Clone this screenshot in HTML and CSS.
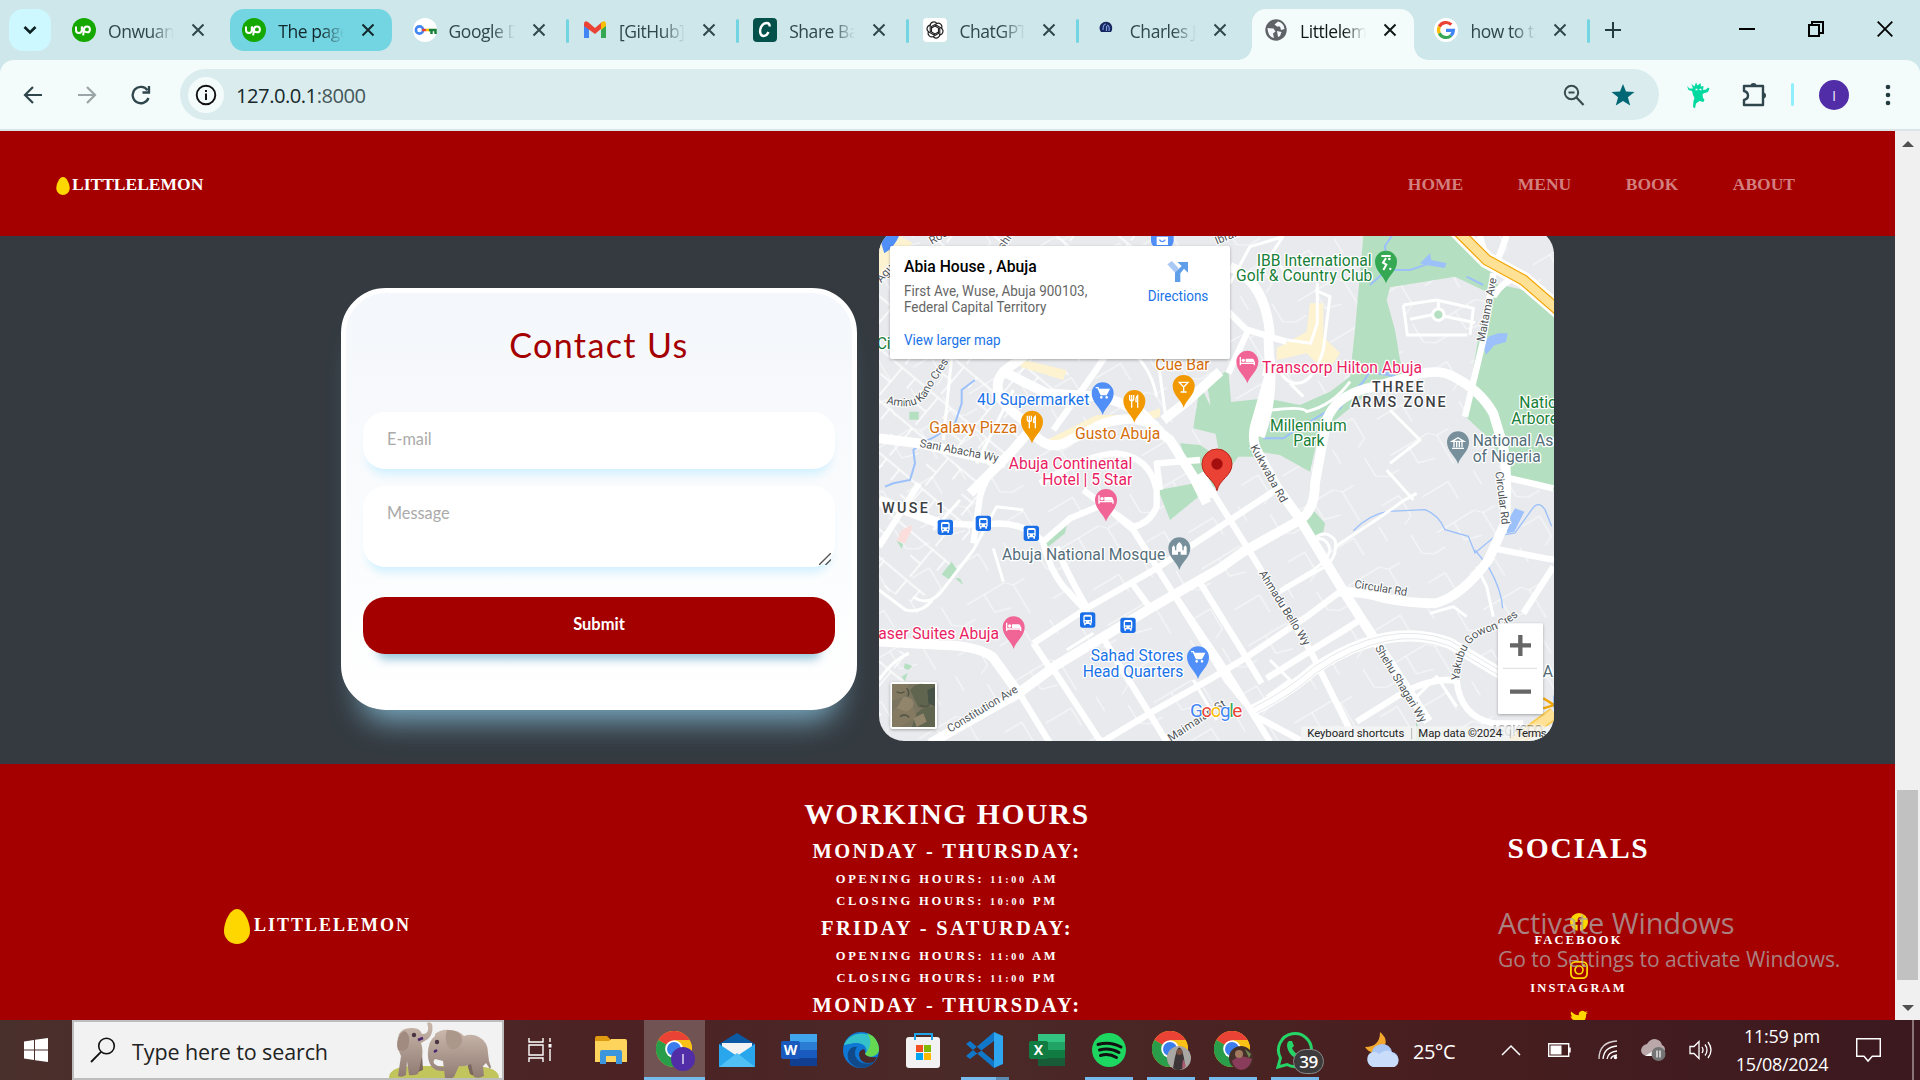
FILE: index.html
```html
<!DOCTYPE html>
<html lang="en">
<head>
<meta charset="utf-8">
<title>Littlelemon</title>
<link rel="stylesheet" href="styles.css">
</head>
<body>
<svg class="defs" width="0" height="0" aria-hidden="true">
  <defs>
    <symbol id="x" viewBox="0 0 14 14"><path d="M1.500 1.500l11 11M12.500 1.500l-11 11" fill="none" stroke="currentColor" stroke-width="2"/></symbol>
    <symbol id="upwork" viewBox="0 0 24 24"><circle cx="12" cy="12" r="12" fill="#14a800"/><path d="M4 8.500v3.500a2.900 2.900 0 0 0 5.800 0V8.500c1 3 2.500 5.800 5.200 5.800a2.900 2.900 0 1 0-2.900-2.900l-1 6" fill="none" stroke="#fff" stroke-width="2"/></symbol>
    <symbol id="chrome" viewBox="0 0 36 36"><circle cx="18" cy="18" r="18" fill="#fbc116"/><path d="M18 18L2.400 9A18 18 0 0 1 33.600 9z" fill="#ea4335"/><path d="M2.400 9A18 18 0 0 0 18 36l8-13.500-8-4.500z" fill="#2a9d4a"/><path d="M18 9h15.600A18 18 0 0 1 18 36l7.800-13.500z" fill="#fbc116"/><circle cx="18" cy="18" r="8.800" fill="#fff"/><circle cx="18" cy="18" r="7" fill="#3b7ded"/></symbol>
    <symbol id="egg" viewBox="0 0 26 35"><path d="M13 0C20 0 26 13 26 22a13 13 0 0 1-26 0C0 13 6 0 13 0z" fill="#ffd700"/></symbol>
    <path id="petal" d="M8.500 14V8.500l4.800-2.800a3.700 3.700 0 0 1 5.200 4.800"/>
    <path id="pin" d="M0 0C-6-22-33-38-33-65A33 33 0 1 1 33-65C33-38 6-22 0 0z"/>
    <g id="bed"><path d="M-21-79v25M21-54v-11M-21-60h42" stroke="#fff" stroke-width="4" fill="none"/><circle cx="-12" cy="-69" r="5" fill="#fff"/><path d="M-5-74h19q7 0 7 8v3H-5z" fill="#fff"/></g>
    <g id="cart" fill="none" stroke="#fff" stroke-width="4"><path d="M-21-82h7l9 21h18M-12-77h31l-6 12H-6z"/><path d="M-10-75h26l-5 9H-6z" fill="#fff"/><circle cx="-4" cy="-53" r="2"/><circle cx="12" cy="-53" r="2"/></g>
    <g id="fork" fill="none" stroke="#fff" stroke-width="4"><path d="M-14-83v12q0 5 6 5t6-5v-12M-8-83v38M10-45v-36q-6 4-5 18h5"/></g>
    <g id="bus"><rect x="-23" y="-23" width="46" height="46" rx="8" fill="#1a6fe8"/><rect x="-13" y="-16" width="26" height="28" rx="6" fill="#fff"/><path d="M-9-10H9V0H-9z" fill="#1a6fe8"/><circle cx="-7" cy="6" r="2.500" fill="#1a6fe8"/><circle cx="7" cy="6" r="2.500" fill="#1a6fe8"/><path d="M-11 10v6h5v-6zM6 10v6h5v-6z" fill="#fff"/></g>
  </defs>
</svg>

<header class="browser">
  <div class="strip">
    <span class="tab-search"><svg width="14" height="10" viewBox="0 0 14 10"><path d="M1.500 2l5.500 5.500L12.500 2" fill="none" stroke="#0e1f22" stroke-width="2.600"/></svg></span>
    <div class="tabs">
      <div class="tab"><svg width="24" height="24"><use href="#upwork"/></svg><span class="name">Onwuanyi</span><svg class="close" width="14" height="14"><use href="#x"/></svg></div>
      <div class="tab hot"><svg width="24" height="24"><use href="#upwork"/></svg><span class="name">The page</span><svg class="close" width="14" height="14"><use href="#x"/></svg></div>
      <div class="tab sep"><svg width="24" height="24" viewBox="0 0 24 24"><circle cx="12" cy="12" r="12" fill="#fff"/><circle cx="6.500" cy="12" r="3.600" fill="none" stroke="#4285f4" stroke-width="2.600"/><path d="M9 12h4" stroke="#ea4335" stroke-width="2.500"/><path d="M13 12h4" stroke="#fbbc04" stroke-width="2.500"/><path d="M16 12h6.500v4M18.500 12v4" stroke="#188038" stroke-width="2.500" fill="none"/></svg><span class="name">Google D</span><svg class="close" width="14" height="14"><use href="#x"/></svg></div>
      <div class="tab sep"><svg width="24" height="24" viewBox="0 0 24 24"><path d="M1 6v14h5V10z" fill="#4285f4"/><path d="M18 10v10h5V6z" fill="#34a853"/><path d="M1 6q0-4 4-2l7 6 7-6v6l-7 6L1 8z" fill="#ea4335"/><path d="M18 4.800q5-3.500 5 1.200v2l-5 4z" fill="#fbbc04"/></svg><span class="name">[GitHub]</span><svg class="close" width="14" height="14"><use href="#x"/></svg></div>
      <div class="tab sep"><svg width="24" height="24" viewBox="0 0 24 24"><rect width="24" height="24" rx="4" fill="#04504a"/><path d="M16.500 8.500q.5-3.500-3-3.500C9 5 6 11 7.500 15.500c1.500 4 6 3 8-1.500" fill="none" stroke="#fff" stroke-width="2.400"/></svg><span class="name">Share Ba</span><svg class="close" width="14" height="14"><use href="#x"/></svg></div>
      <div class="tab sep"><svg width="24" height="24" viewBox="0 0 24 24"><rect width="24" height="24" rx="4" fill="#fff"/><g fill="none" stroke="#222" stroke-width="1.150"><use href="#petal"/><use href="#petal" transform="rotate(60 12 12)"/><use href="#petal" transform="rotate(120 12 12)"/><use href="#petal" transform="rotate(180 12 12)"/><use href="#petal" transform="rotate(240 12 12)"/><use href="#petal" transform="rotate(300 12 12)"/></g></svg><span class="name">ChatGPT</span><svg class="close" width="14" height="14"><use href="#x"/></svg></div>
      <div class="tab"><svg width="24" height="24" viewBox="0 0 24 24"><path d="M7 14Q4 10 7 6q4-4 9-1 4 4 1 9z" fill="#16275f"/><path d="M9 12q0-6 3-6M12.500 13V8m2.500 5q1-5-2-6" stroke="#7d9be0" stroke-width="1.200" fill="none"/></svg><span class="name">Charles J</span><svg class="close" width="14" height="14"><use href="#x"/></svg></div>
      <div class="tab active"><svg width="24" height="24" viewBox="0 0 24 24"><circle cx="12" cy="12" r="10.700" fill="#5f6368"/><path d="M3.500 10l6 .5 2 3-2.500 2 1 4.500Q4 19 3.500 10zM14 3.500l-3.500 3 2.500 2h3l1 3.500 3.500-1Q20 5 14 3.500zM13 13l4.500 1-1.500 4-2 1z" fill="#f4fafb"/></svg><span class="name">Littlelemon</span><svg class="close" width="14" height="14"><use href="#x"/></svg></div>
      <div class="tab sep"><svg width="24" height="24" viewBox="0 0 24 24"><circle cx="12" cy="12" r="12" fill="#fff"/><g fill="none" stroke-width="3.200"><path d="M17.300 6.700A7.500 7.500 0 0 0 5.300 8.700" stroke="#ea4335"/><path d="M5.300 8.700a7.500 7.500 0 0 0 0 6.600" stroke="#fbbc04"/><path d="M5.300 15.300a7.500 7.500 0 0 0 11.700 2.300" stroke="#34a853"/><path d="M17 17.600a7.500 7.500 0 0 0 2.400-5.200H12" stroke="#4285f4"/></g></svg><span class="name">how to tak</span><svg class="close" width="14" height="14"><use href="#x"/></svg></div>
    </div>
    <svg class="plus" width="16" height="16" viewBox="0 0 16 16"><path d="M8 0v16M0 8h16" stroke="#233a3e" stroke-width="2"/></svg>
    <div class="win-buttons">
      <svg width="16" height="16" viewBox="0 0 16 16"><path d="M0 8h16" stroke="#000" stroke-width="2"/></svg>
      <svg width="16" height="16" viewBox="0 0 16 16"><path d="M1 4h10v11H1zM4 4V1h11v11h-4" fill="none" stroke="#000" stroke-width="2"/></svg>
      <svg width="16" height="16" viewBox="0 0 16 16"><path d="M.7.700l14.600 14.600M15.300.700L.7 15.300" stroke="#000" stroke-width="1.800"/></svg>
    </div>
  </div>
  <div class="toolbar">
    <div class="nav-buttons">
      <svg width="20" height="20" viewBox="0 0 20 20"><path d="M19 10H2M10 2l-8 8 8 8" fill="none" stroke="#2f474c" stroke-width="2.200"/></svg>
      <svg width="20" height="20" viewBox="0 0 20 20"><path d="M1 10h17M10 2l8 8-8 8" fill="none" stroke="#9aa5a7" stroke-width="2.200"/></svg>
      <svg width="20" height="20" viewBox="0 0 20 20"><path d="M17.500 13a8.200 8.200 0 1 1-1-7.800M18 1v6.500h-6.500" fill="none" stroke="#2f474c" stroke-width="2.300"/></svg>
    </div>
    <div class="omnibox">
      <span class="site-info"><svg width="22" height="22" viewBox="0 0 22 22"><circle cx="11" cy="11" r="9.300" fill="none" stroke="#111" stroke-width="1.900"/><path d="M11 9.500V16M11 6v2" stroke="#111" stroke-width="2"/></svg></span>
      <span class="url">127.0.0.1<span>:8000</span></span>
      <svg class="lens" width="22" height="22" viewBox="0 0 22 22"><circle cx="8.500" cy="8.500" r="6.700" fill="none" stroke="#3a4a4d" stroke-width="2"/><path d="M13.500 13.500l7 7.500M5.500 8.500h6" stroke="#3a4a4d" stroke-width="2.200"/></svg>
      <svg width="24" height="24" viewBox="0 0 24 24"><path d="M12 1l3 7.600 8.500.4-6.600 5.200 2.300 8.300L12 18l-7.200 4.500 2.300-8.300L.5 9 9 8.600z" fill="#006874"/></svg>
    </div>
    <div class="extensions">
      <svg width="24" height="26" viewBox="0 0 24 26"><path d="M1 4l2.500 2.500L7 6.500 5.500 2l3 2.500L10 .5l1.500 3L14.500 1l.5 3.500 2.500-.5-.5 4 3-.5L22 5.500l1.500 1-1.500 3.500-4 1.200-1.500 1 .5 3.800 1.500 1.500-1 2.500-4-1-3.500 2.500-1 5L7 25l.5-6 1-3-1.500-3-1-4L2.500 8z" fill="#00d9a0"/><path d="M9.500 7.500h2M13.500 7.500h2" stroke="#f4fbfb" stroke-width="1.600"/></svg>
      <svg width="26" height="26" viewBox="0 0 26 26"><path d="M3 4h19v19H3v-5q4-1 4-4.500T3 9z" fill="none" stroke="#2f474c" stroke-width="2.400" stroke-linejoin="round"/><path d="M9.500 4a3 3 0 0 1 6 0zM22 10.500a3 3 0 0 1 0 6z" fill="#2f474c"/></svg>
      <i class="bar"></i>
      <span class="avatar">I</span>
      <svg width="6" height="22" viewBox="0 0 6 22"><g fill="#233a3e"><circle cx="3" cy="3" r="2.300"/><circle cx="3" cy="11" r="2.300"/><circle cx="3" cy="19" r="2.300"/></g></svg>
    </div>
  </div>
</header>

<div class="viewport">
  <div class="page">
    <nav class="site-nav">
      <div class="brand"><svg width="14" height="18"><use href="#egg"/></svg><span>LITTLELEMON</span></div>
      <div class="links"><a>HOME</a><a>MENU</a><a>BOOK</a><a>ABOUT</a></div>
    </nav>
    <main class="contact">
      <form class="card">
        <h1>Contact Us</h1>
        <div class="field">E-mail</div>
        <div class="field area">Message<svg width="12" height="12" viewBox="0 0 12 12"><path d="M0 12L12 0M6.500 12L12 6.500" stroke="#555" stroke-width="1.400"/></svg></div>
        <div class="submit">Submit</div>
      </form>
      <div class="map">
        <svg width="675" height="505" viewBox="27 18 2025 1515">
          <clipPath id="frame"><rect x="27" y="-3" width="2025" height="1536" rx="75"/></clipPath>
          <pattern id="streets" width="330" height="270" patternUnits="userSpaceOnUse" patternTransform="rotate(-31)"><path d="M0 34h130l20 20h40M150 54v98M60 34v62l50 14M20 190h88v60M260 0v64l30 20h40M230 150h60v70l-30 14M190 200v50" fill="none" stroke="#fff" stroke-width="3" opacity=".75"/></pattern>
          <pattern id="streets2" width="140" height="120" patternUnits="userSpaceOnUse" patternTransform="rotate(40)"><path d="M0 14h140M60 14v106M20 70h40M110 14v40" fill="none" stroke="#fff" stroke-width="5" opacity=".85"/></pattern>
          <g clip-path="url(#frame)">
            <path d="M27-3h2025v1536H27z" fill="#e8eaed"/>
            <path d="M27-3h2025v1536H27z" fill="url(#streets)"/>
            <path d="M27-3h900L640 380 380 700 300 890 300 960 130 1130 27 1060zM27 1250l100 20-20 130-80 60z" fill="url(#streets2)"/>
            <g fill="#fdf3d0"><path d="M27 40l60-22 40 20-60 90-40 10zM460 390l130 30-10 30-130-40zM500 645l180-90 130 0 60-20v25l-60 20-120 0-110 60zM1320 220h40v100l50 50-40 60-60-60-90 20v-35l90-50z"/></g>
            <g fill="#b4dfc0">
              <path d="M1480 18H1760L1872 130 1850 185 1755 140 1560 172 1550 210 1575 300 1590 390 1610 440 1470 475 1440 440 1455 300z"/>
              <path d="M1870 160l182 40v580l-130-40-60-110-75-70 40-250z"/>
              <path d="M1190 505l100 20 90-40 60-45 60 45-110 90-50 60-20 90-90-50-130-20-50-40-80-20 20-130 30 60 70-10z"/>
              <path d="M1010 460l65-40 10 120 60 60 20 80-60 0-70 90-25 10-110 90-35-90 110-20-45-120 60 5 60 40z"/>
              <path d="M515 930l80-65-10 45-52 42zM245 995l-30 38 25 17 24-27zM255 1045l25 20-10-20zM118 545h28v24h-28zM1320 830l45 50-5 25-35 15-35-65zM105 1300l22 8-12 12-14-6zM95 1340l18-12-8 26zM1638 1475l30 60h-30zM80 932l20 10-5 14z"/>
            </g>
            <path d="M95 900l30-15 0 15-20 40-25-8z" fill="#fbdedc"/>
            <g fill="#9cc0fa" stroke="none"><path d="M1885 310l28 0-5 26-35 10-25 28-10-35 20-20zM1935 835l28 10-30 60-22 5-2-30zM1650 100l30-30 4 20 46 10-6 14-60-10z"/></g>
            <g fill="none" stroke="#9cc0fa" stroke-width="6"><path d="M1500 165l50-45 70 0 60-20M1565 18l-20 30 5 60M1790 140l50 25M1530 420l50 20-80-15-20 30-50 50-20 30-40 10-100 60-30 20h-60M315 450l-40 30 0 40-20 60-60 40-40 20-25 20 5 40-15 50-50 10-25 10"/><path d="M1450 902q50-50 105-58l110-5q40 15 60 60l70 20 20 50 60-50 60-10 50-70q20-30 40 0l20 50M1815 960l40 50q40 70 43 125" stroke-width="4"/></g>
            <path d="M27 18h60q-14 34-44 52z" fill="#4f8ff7"/>
            <g fill="none" stroke="#fff" stroke-width="9" stroke-linejoin="round">
              <path d="M1600 225l12 90h180M1600 225l100-15 110 25-10 80M1620 268l75-15 120 25M1705 240v-30M1335 180l45 20-20 160q-30 100-80 100-40 0-60-60M1342 160v120l-20 60-70-10M1170 545q130-20 140 0 80-20 130-90M1260 460l40 40M1560 540l90 90-90 70M1550 720l80 90M1640 790l-40 22-70 50-130 85M1340 920q30-20 55 10 10 50-30 80l-140 80M1330 930q40-15 50 30-5 30-50 60l-100 60M1820 1010l30 60 20 90M1680 1150l70-20 40 30M1080 160l60-110 100-30M1240 18l-40 60 60 60 60-20M60 360l60 0 60-60M190 900l80-90M130 1100q40 30 80-10l100-130 70-130 80 10M27 1080l80 60q50 10 80-30M370 955l30 100M590 1260l80-50M1640 1400l60-60 60 90M1200 1290l60 60-70 50M1040 1470l-70-120M27 1350q40-60 90-80"/>
              <path d="M780 500l100 100M860 360l30 220M740 330q100 60 120 170M250 330l-30 300M430 480l-110 220"/>
            </g>
            <g fill="none" stroke="#fff" stroke-width="19" stroke-linejoin="round">
              <path d="M690 1540l170-102 160-90 100-60 190-128 110-82M490 1240l160-105 210-120 160-105 200-132M1460 1475l120-75q100-60 180-48M1190 1345l280-175M720 840l70 60 110 175 170 250 130 210M430 1360l110 180M545 1310l150 230M700 1225l190 310M490 1240l60 90M790 1065l55 75M910 1090l160 260 90 110 130 70M985 1050l130 210 60 100M1030 790l100 160 190 310 145 290M310 940l20-140q20-70 60-100M200 880l140 5q110-20 180 50l80-70 120-50M520 940q20 80 60 130l75 80M560 950q20 60 95 190M640 780l80 60 70 50q50-10 70-60v-50q-20-100-120-110-80 0-230 90M27 950l120-190M740 330l-90 130-100 140"/>
              <path d="M1870 130l-30 200-55 230M1830 18q20 90 50 80l30-80M1870 200q30-50 80-60M1760 1350q10 110 110 130l90 0M1960 1150l90-140M1870 955l182 35M1920 745l130 30M1075 430l60-130 80 25 35 10M1075 245l55 55M870 780l-10-80 130-10"/>
            </g>
            <g fill="none" stroke="#fff" stroke-width="29" stroke-linejoin="round">
              <path d="M180 1540l265-150 115-85 290-175 200-115 70-50 170-95q45-30 45-110l35-190q25-70 120-95 80-20 110-30 100-35 150-5 80 40 120 110l30 100q15 90 5 230l-50 110q-80 110-160 130-80 0-150-15-60-20-140-20M1195 320l5 110-40 140q-20 60 5 100l55 100 65 90 130 215 110 170 150 230M1080 110q110 50 120 210M1190 440l10-50q10 120-30 230M990 730l40 70M27 625l120 15 260 60M300 790l120-120 70-80q-150-90-90-165l130 65 160 10q90 20 120 60l90 70 70 110 40 80M400 425l80-60M490 610q50 60 110 20l100-50q100-30 160 10M880 570l70-55 100-90M27 1235l180 10q110 0 160 35l80 110M27 810l180 70"/>
            </g>
            <g fill="none"><path d="M1150 1440q100-50 180-120 220-150 410-80l150 90" stroke="#fff" stroke-width="34"/><path d="M1150 1432q100-50 180-120 220-150 410-80l150 90M1160 1448q100-50 180-120 220-150 400-80l150 90" stroke="#d8dbe0" stroke-width="2"/></g>
            <path d="M1760 0l90 90 110 60 110 95" fill="none" stroke="#fff" stroke-width="50"/><path d="M1760 0l90 90 110 60 110 95" fill="none" stroke="#f2a400" stroke-width="34"/><path d="M1760 0l90 90 110 60 110 95" fill="none" stroke="#fee195" stroke-width="27"/>
            <path d="M1930 1540l122-90" fill="none" stroke="#fbc94a" stroke-width="38"/><path d="M1930 1540l122-90" fill="none" stroke="#fee195" stroke-width="28"/><path d="M2020 1405l32 20-32 10" fill="none" stroke="#f2a400" stroke-width="7"/>
            <circle cx="1705" cy="254" r="17" fill="#b4dfc0" stroke="#fff" stroke-width="9"/>

            <g class="road-label">
              <text x="185" y="44" transform="rotate(-30 185 44)">Rouf</text><text x="400" y="60" transform="rotate(-55 400 60)">shi</text><text x="1040" y="44" transform="rotate(-22 1040 44)">Ibrahim</text><text x="34" y="160" transform="rotate(-50 34 160)">Agu</text>
              <path id="ak" d="M48 520Q150 550 180 480L246 380" fill="none"/><text textLength="255"><textPath href="#ak">Aminu Kano Cres</textPath></text>
              <text x="148" y="650" transform="rotate(11 148 650)" textLength="240">Sani Abacha Wy</text>
              <text x="1843" y="337" transform="rotate(-79 1843 337)" textLength="195">Maitama Ave</text>
              <text x="1140" y="652" transform="rotate(61 1140 652)" textLength="192">Kukwaba Rd</text>
              <text x="1876" y="726" transform="rotate(83 1876 726)" textLength="160">Circular Rd</text>
              <text x="1452" y="1073" transform="rotate(9 1452 1073)" textLength="160">Circular Rd</text>
              <text x="1166" y="1030" transform="rotate(58 1166 1030)" textLength="258">Ahmadu Bello Wy</text>
              <text x="1514" y="1254" transform="rotate(58.500 1514 1254)" textLength="265">Shehu Shagari Wy</text>
              <path id="yg" d="M1768 1352Q1775 1230 1850 1208T1960 1140" fill="none"/><text textLength="286"><textPath href="#yg">Yakubu Gowon Cres</textPath></text>
              <text x="240" y="1508" transform="rotate(-31 240 1508)" textLength="240">Constitution Ave</text>
              <text x="902" y="1536" transform="rotate(-33 902 1536)" textLength="200">Maimalari St</text>
            </g>

            <g class="poi">
              <g class="green"><text x="1160" y="107" textLength="345">IBB International</text><text x="1098" y="154" textLength="409">Golf &amp; Country Club</text><text x="1200" y="602" textLength="230">Millennium</text><text x="1270" y="647" textLength="93">Park</text><text x="1948" y="534">National</text><text x="1924" y="582">Arboretum</text><text x="20" y="358">City</text></g>
              <g class="pink"><text x="1176" y="430" textLength="480">Transcorp Hilton Abuja</text><text x="416" y="716" textLength="371">Abuja Continental</text><text x="517" y="764" textLength="270">Hotel | 5 Star</text><text x="25" y="1228" textLength="362">aser Suites Abuja</text></g>
              <g class="orange"><text x="856" y="420" textLength="163">Cue Bar</text><text x="178" y="609" textLength="264">Galaxy Pizza</text><text x="615" y="628" textLength="256">Gusto Abuja</text></g>
              <g class="blue"><text x="321" y="524" textLength="337">4U Supermarket</text><text x="662" y="1293" textLength="278">Sahad Stores</text><text x="638" y="1341" textLength="302">Head Quarters</text></g>
              <g class="slate"><text x="396" y="990" textLength="490">Abuja National Mosque</text><text x="1808" y="649">National Assembly</text><text x="1808" y="696" textLength="204">of Nigeria</text><text x="2018" y="1340">A.</text></g>
              <g class="zone"><text x="1506" y="486" textLength="155">THREE</text><text x="1443" y="530" textLength="284">ARMS ZONE</text><text x="36" y="848" textLength="187">WUSE 1</text><text x="1860" y="1518" opacity=".45" textLength="160">ASOKORO</text></g>
            </g>

            <g transform="translate(698 555)"><use href="#pin" fill="#4f8ff7"/><use href="#cart"/></g>
            <g transform="translate(984 1347)"><use href="#pin" fill="#4f8ff7"/><use href="#cart"/></g>
            <g transform="translate(793 578)"><use href="#pin" fill="#f29900"/><use href="#fork"/></g>
            <g transform="translate(486 640)"><use href="#pin" fill="#f29900"/><use href="#fork"/></g>
            <g transform="translate(941 533)"><use href="#pin" fill="#f29900"/><path d="M-13-76h26L0-62zM0-64v18M-9-47H9" fill="none" stroke="#fff" stroke-width="4"/></g>
            <g transform="translate(1132 460)"><use href="#pin" fill="#f06595"/><use href="#bed"/></g>
            <g transform="translate(708 875)"><use href="#pin" fill="#f06595"/><use href="#bed"/></g>
            <g transform="translate(431 1257)"><use href="#pin" fill="#f06595"/><use href="#bed"/></g>
            <g transform="translate(1548 160)"><use href="#pin" fill="#34a853"/><path d="M-14-82H14M0-76l-9 14 10 6-9 16" stroke="#fff" stroke-width="6" fill="none"/><circle cx="10" cy="-73" r="4" fill="#fff"/><circle cx="13" cy="-43" r="3.500" fill="#fff"/></g>
            <g transform="translate(1764 702)"><use href="#pin" fill="#78909c"/><path d="M-18-68L0-79 18-68zM-12-66v16M-4-66v16M4-66v16M12-66v16M-18-47h36" stroke="#fff" stroke-width="4" fill="none"/></g>
            <g transform="translate(928 1020)"><use href="#pin" fill="#78909c"/><path d="M-22-46v-22l5-6 4 6v9h4v-12q0-6 9-13 9 7 9 13v12h4v-9l5-6 4 6v22H4v-9h-8v9z" fill="#fff"/></g>
            <use href="#bus" transform="translate(226 892)"/><use href="#bus" transform="translate(340 880)"/><use href="#bus" transform="translate(484 910)"/><use href="#bus" transform="translate(653 1170)"/><use href="#bus" transform="translate(774 1186)"/><use href="#bus" transform="translate(2074 1415)"/>
            <path d="M843-3h68v34q0 14-12 22h-44q-12-8-12-22z" fill="#4f8ff7"/><path d="M860 20h34v25h-34z" fill="#fff"/><path d="M868 29q9 12 18 0" fill="none" stroke="#4f8ff7" stroke-width="4"/>
            <path d="M1041 782C1034 748 996 738 996 702a45 45 0 0 1 90 0C1086 738 1048 748 1041 782z" fill="#ea4335" stroke="#b8271b" stroke-width="3"/><circle cx="1041" cy="702" r="17" fill="#a50e0e"/>

            <g class="info"><rect x="60" y="48" width="1020" height="339" rx="6" fill="#fff"/>
              <text class="title" x="102" y="127" textLength="398" lengthAdjust="spacingAndGlyphs">Abia House , Abuja</text>
              <text x="102" y="198" textLength="550" lengthAdjust="spacingAndGlyphs">First Ave, Wuse, Abuja 900103,</text><text x="102" y="246" textLength="427" lengthAdjust="spacingAndGlyphs">Federal Capital Territory</text>
              <text class="link" x="102" y="345" textLength="290" lengthAdjust="spacingAndGlyphs">View larger map</text><text class="link" x="833" y="213" textLength="182" lengthAdjust="spacingAndGlyphs">Directions</text>
              <path d="M892 103l14-10 20 22-8 16z" fill="#a9c9f5"/><path d="M915 156v-28l20-20-13-12h32v32l-12-12-11 14v26z" fill="#5f9ee8"/></g>
            <g class="thumb"><rect x="61" y="1356" width="140" height="141" rx="6" fill="#fff"/><rect x="66" y="1362" width="129" height="129" fill="#7b7560"/>
              <g opacity=".6"><path d="M66 1362h50q-4 30-20 40l-30 10zM70 1440q20-24 40-20t30 40l-50 31H66z" fill="#8b7d63"/><path d="M120 1380q20-22 40-18h35v50q-20 24-50 20zM140 1450q20-24 55-20v61h-70z" fill="#4f5b46"/><path d="M100 1400q24 0 30 15t-20 30l-30-10zM130 1465l30-15 10 25-30 16z" fill="#a08f75"/><path d="M172 1380l23-10v60l-20-10z" fill="#243b35"/><path d="M80 1385q12 8 24 0M90 1460q14-12 28 2M150 1425q14 10 30 0M110 1375q10 12 4 24" fill="none" stroke="#3b4134" stroke-width="5"/></g></g>
            <g class="google"><text x="960" y="1461" textLength="157"><tspan fill="#4285f4">G</tspan><tspan fill="#ea4335">o</tspan><tspan fill="#fbbc04">o</tspan><tspan fill="#4285f4">g</tspan><tspan fill="#34a853">l</tspan><tspan fill="#ea4335">e</tspan></text></g>
            <path d="M1294 1489h758v44h-758z" fill="#f5f5f5" opacity=".78"/>
            <g class="legal"><text x="1312" y="1520" textLength="291">Keyboard shortcuts</text><text x="1645" y="1520" textLength="251">Map data ©2024</text><text x="1938" y="1520" textLength="92">Terms</text><path d="M1625 1494v34M1921 1498v26" stroke="#999" stroke-width="2"/></g>
            <g class="zoomer"><rect x="1884" y="1180" width="135" height="272" rx="4" fill="#fff"/><path d="M1899 1315h102" stroke="#ddd" stroke-width="3"/><path d="M1920 1246h63M1951 1215v63M1920 1385h63" stroke="#666" stroke-width="13"/></g>
          </g>
        </svg>
      </div>
    </main>
    <footer class="site-footer">
      <div class="foot-brand"><svg width="26" height="35"><use href="#egg"/></svg><span>LITTLELEMON</span></div>
      <div class="hours">
        <h2>WORKING HOURS</h2>
        <h3>MONDAY - THURSDAY:</h3><p>OPENING HOURS: <b>11:00</b> AM</p><p>CLOSING HOURS: <b>10:00</b> PM</p>
        <h3>FRIDAY - SATURDAY:</h3><p>OPENING HOURS: <b>11:00</b> AM</p><p>CLOSING HOURS: <b>11:00</b> PM</p>
        <h3>MONDAY - THURSDAY:</h3>
      </div>
      <div class="socials">
        <h2>SOCIALS</h2>
        <svg width="18" height="18" viewBox="0 0 18 18"><circle cx="9" cy="9" r="9" fill="#ffd700"/><path d="M7.600 18v-6.300H5.300V9h2.300V7q0-3 3-3h1.900v2.200h-1.200q-1.200 0-1.200 1.200V9h2.300l-.4 2.700h-1.900V18z" fill="#a50000"/></svg>
        <p>FACEBOOK</p>
        <svg width="18" height="18" viewBox="0 0 18 18"><rect x=".9" y=".9" width="16.200" height="16.200" rx="4.500" fill="none" stroke="#ffd700" stroke-width="1.800"/><circle cx="9" cy="9" r="4" fill="none" stroke="#ffd700" stroke-width="1.700"/><circle cx="13.700" cy="4.300" r="1.200" fill="#ffd700"/></svg>
        <p>INSTAGRAM</p>
        <svg width="18" height="18" viewBox="0 0 18 18"><path d="M18 3.400q-1 .5-2.100.6Q17 3.200 17.500 2q-1.100.7-2.400.9a3.700 3.700 0 0 0-6.300 3.400Q4.300 6.100 1.300 2.500q-1.500 3 1.100 4.900-.9 0-1.700-.5 0 2.800 3 3.700-.8.200-1.700 0 .8 2.400 3.500 2.600Q3.100 15.100 0 14.800q9 4.700 14.300-2.800 2.200-3.700 1.800-6.800 1.100-.8 1.900-1.800z" fill="#ffd700"/></svg>
      </div>
    </footer>
  </div>
  <div class="scrollbar"><i class="up"></i><i class="thumb-bar"></i><i class="down"></i></div>
  <div class="watermark"><p>Activate Windows</p><p>Go to Settings to activate Windows.</p></div>
</div>

<div class="taskbar">
  <div class="start"><svg width="24" height="24" viewBox="0 0 24 24"><path d="M0 3.500L10 2v9.500H0zM11 1.800L24 0v11.500H11zM0 12.500h10V22L0 20.500zM11 12.500h13V24l-13-1.800z" fill="#fff"/></svg></div>
  <div class="search">
    <svg width="26" height="26" viewBox="0 0 26 26"><circle cx="16.500" cy="9" r="7.800" fill="none" stroke="#111" stroke-width="1.600"/><path d="M11 14.800L1 25" stroke="#111" stroke-width="1.800"/></svg>
    <span>Type here to search</span>
    <svg class="elephants" width="110" height="56" viewBox="0 0 110 56">
      <defs><linearGradient id="skin" x1="0" y1="0" x2="0" y2="1"><stop offset="0" stop-color="#cbb8ac"/><stop offset="1" stop-color="#8f7b72"/></linearGradient></defs>
      <path d="M0 56q0-12 26-12h60q24 1 24 12z" fill="#c2c45c"/>
      <path d="M76 34h12l2 18q-4 3-9 0zM24 32h9l1 16-5 2z" fill="#7b675d"/>
      <path d="M10 12Q14 5 24 6q7 0 9 6 7 0 6-7l-1-4q3-2 5 1 2 9-4 15l-7 4q3 8 0 18l-3 13q-5 2-9 1l-2-14-1 14q-4 3-8 1L12 34Q6 22 10 12z" fill="url(#skin)"/>
      <path d="M12 11q-6 10-3 17 10 3 11-7 1-9-4-12z" fill="#a18b80"/>
      <path d="M46 12q7-5 14-4 10 0 15 6 8-3 15 1 9 5 9 16l1 8 2 6-1 2-4-6-3 3 1 10q-5 3-10 1l-3-13q-6 3-12 2l-5 11q-5 3-9 1l-2-17-8-2q-4 4 3 7l6 1v4q-14 1-16-14-1-15 7-21z" fill="url(#skin)"/>
      <path d="M58 8q16 0 15 12-4 9-12 7-7-8-3-19z" fill="#ac978b"/><circle cx="25" cy="13" r="2.200" fill="#493440"/><circle cx="48" cy="20" r="2.200" fill="#493440"/><path d="M29 18l5-2M45 30l3-2" stroke="#4a2670" stroke-width="2.500"/>
    </svg>
  </div>
  <div class="apps">
    <div class="app"><svg width="24" height="24" viewBox="0 0 24 24"><g fill="none" stroke="#fff" stroke-width="1.400"><path d="M1 0v4h14V0M1 24v-4h14v4M1 7h14v10H1zM22 0v4M22 11v12"/></g><path d="M20.500 6h3v3.500h-3z" fill="#fff"/></svg></div>
    <div class="app"><svg width="32" height="28" viewBox="0 0 32 28"><path d="M0 2q0-2 2-2h10l3 3v4H0z" fill="#e09a10"/><path d="M0 5h14l2-2h14q2 0 2 2v21H0z" fill="#ffd45c"/><path d="M5 28V16q0-2 2-2h18q2 0 2 2v12h-6v-8H11v8z" fill="#3b96dd"/></svg></div>
    <div class="app on wide"><svg width="42" height="42" viewBox="0 0 42 42"><use href="#chrome" width="36" height="36" x="2" y="2"/><circle cx="29" cy="30" r="12" fill="#512da8"/><path d="M29 25v10" stroke="#d6cdec" stroke-width="1.600"/></svg></div>
    <div class="app"><svg width="36" height="34" viewBox="0 0 36 34"><path d="M18 0l18 11v22H0V11z" fill="#0c59a4"/><path d="M3 10h30v14H3z" fill="#f3f3f3"/><path d="M0 11l18 12L36 11v23H0z" fill="#2aa7ec"/><path d="M0 34l18-14 18 14z" fill="#50c0f5"/></svg></div>
    <div class="app"><svg width="36" height="34" viewBox="0 0 36 34"><path d="M9 1h27v8H9z" fill="#41a5ee"/><path d="M9 9h27v8H9z" fill="#2b7cd3"/><path d="M9 17h27v8H9z" fill="#185abd"/><path d="M9 25h27v8H9z" fill="#103f91"/><rect y="8" width="19" height="18" rx="2" fill="#185abd"/><text x="9.500" y="22" text-anchor="middle">W</text></svg></div>
    <div class="app"><svg width="36" height="36" viewBox="0 0 36 36"><circle cx="18" cy="18" r="18" fill="#0f78d4"/><path d="M1 13C6-2 33-4 36 17c0 8-12 10-14 5 4-4 0-11-8-11-6 0-11 2-13 2z" fill="#34c1c9"/><path d="M24 1q11 4 12 16c0 8-12 10-14 5 5-5 8-13 2-21z" fill="#66d952"/><path d="M14 15c-6 8 2 21 17 15-6 8-19 8-25-1-4-9 2-16 8-14z" fill="#114a8b"/><path d="M22 22q3 4 12 3l-3 5q-13 4-15-7 0-5 5-6 2 2 1 5z" fill="#4a2728"/></svg></div>
    <div class="app"><svg width="36" height="36" viewBox="0 0 36 36"><rect x="1" y="5" width="34" height="31" rx="3" fill="#f2f2f2"/><path d="M10 8V2h17v6" fill="none" stroke="#1fa5e8" stroke-width="2"/><path d="M11 13h7v7h-7z" fill="#f25022"/><path d="M19 13h7v7h-7z" fill="#7fba00"/><path d="M11 21h7v7h-7z" fill="#00a4ef"/><path d="M19 21h7v7h-7z" fill="#ffb900"/></svg></div>
    <div class="app on split"><svg width="38" height="36" viewBox="0 0 38 36"><path d="M0 12l4-3 24 20v7zM0 24l4 3L28 9V0z" fill="#1177c9"/><path d="M28 0l9 4v28l-9 4z" fill="#2ea6f0"/></svg></div>
    <div class="app"><svg width="36" height="34" viewBox="0 0 36 34"><path d="M9 1h27v8H9z" fill="#33c481"/><path d="M9 9h27v8H9z" fill="#21a366"/><path d="M9 17h27v8H9z" fill="#107c41"/><path d="M9 25h27v8H9z" fill="#185c37"/><rect y="8" width="19" height="18" rx="2" fill="#107c41"/><text x="9.500" y="22" text-anchor="middle">X</text></svg></div>
    <div class="app on"><svg width="34" height="34" viewBox="0 0 34 34"><circle cx="17" cy="17" r="17" fill="#1ed760"/><path d="M6 11.500q12-3.500 23 2.500M7.500 17q10-3 19.500 2.500M8.500 22.500q8.500-2.500 16 2" fill="none" stroke="#111" stroke-width="3" stroke-linecap="round"/></svg></div>
    <div class="app on"><svg width="42" height="42" viewBox="0 0 42 42"><use href="#chrome" width="36" height="36" x="2" y="2"/><circle cx="29" cy="29" r="12" fill="#a9a7a4"/><path d="M23 39l2-11 2-7q2-5 5 0l2 8 1 9q-6 6-12 1z" fill="#3d3438"/><circle cx="29.500" cy="23" r="3" fill="#7a5143"/><path d="M33 30l3 7-4 3z" fill="#b05a70"/></svg></div>
    <div class="app on"><svg width="42" height="42" viewBox="0 0 42 42"><use href="#chrome" width="36" height="36" x="2" y="2"/><circle cx="29" cy="29" r="12" fill="#46312a"/><path d="M20 32q8-8 20-2-3 11-11 11-7-1-9-9z" fill="#8a3d5a"/><circle cx="27" cy="25" r="4" fill="#a0795f"/><path d="M33 20l6 5-2 4z" fill="#6f8454"/></svg></div>
    <div class="app on whatsapp"><svg width="38" height="38" viewBox="0 0 38 38"><path d="M2 36l2.500-9A16.500 16.500 0 1 1 11 33.500z" fill="none" stroke="#25d366" stroke-width="3"/><path d="M13 10l3 0 2 5-2 2q2 5 7 7l2-3 5 3q0 4-5 4-12-1-14-13 0-4 2-5z" fill="#25d366"/></svg><span class="badge">39</span></div>
  </div>
  <div class="tray">
    <svg class="weather" width="37" height="36" viewBox="0 0 37 36"><path d="M15 0q12 10-1 19-9 4-14-4 15 0 15-15z" fill="#f3a72c"/><path d="M8 35a8 8 0 0 1-1-15q1-7 10-8 8 0 10 8a8 8 0 0 1 2 15z" fill="#a9c6f5"/><path d="M8 35a8 8 0 0 1-2-14q4-3 8 1 9-7 15 0a7 7 0 0 1 0 13z" fill="#c9dcfa"/></svg>
    <span class="temp">25°C</span>
    <svg class="up-arrow" width="20" height="12" viewBox="0 0 20 12"><path d="M1 11l9-9 9 9" fill="none" stroke="#fff" stroke-width="1.500"/></svg>
    <svg class="battery" width="23" height="14" viewBox="0 0 23 14"><path d="M.7.700h20v12.600H.7zM22 4.500v5" fill="none" stroke="#fff" stroke-width="1.400"/><path d="M2.500 2.500h11v9h-11z" fill="#fff"/></svg>
    <svg class="wifi" width="20" height="20" viewBox="0 0 20 20"><g fill="none" stroke="#fff" stroke-width="1.300"><path d="M1 19Q1 2 19 1" opacity=".8"/><path d="M5 19Q6 7 19 6"/><path d="M9 19q1-7 10-8"/><path d="M13 19q0-3 6-4"/></g><circle cx="17.500" cy="17.500" r="1.700" fill="#fff"/></svg>
    <svg class="cloud" width="25" height="22" viewBox="0 0 25 22"><path d="M6 17q-6-1-6-6 1-5 6-6 3-5 8-5 6 1 7 6 3 1 3 5l-4 6z" fill="#b9a7a9"/><path d="M4 17l10-6 4 6z" fill="#fff"/><circle cx="17.500" cy="15" r="7" fill="#747474"/><path d="M16 11.500v7M19 11.500v7" stroke="#fff" stroke-width="1.200"/></svg>
    <svg class="speaker" width="24" height="20" viewBox="0 0 24 20"><path d="M1 6.500h4L10 1.500v17l-5-5H1z" fill="none" stroke="#fff" stroke-width="1.300"/><path d="M13 7q2 3 0 6M16 4.500q4 5.500 0 11M19 2q6 8 0 16" fill="none" stroke="#fff" stroke-width="1.300"/></svg>
    <div class="clock"><span>11:59 pm</span><span>15/08/2024</span></div>
    <svg class="notes" width="25" height="25" viewBox="0 0 25 25"><path d="M.7.700h23.600v17.600h-8L12 23l-4-4.700H.7z" fill="none" stroke="#fff" stroke-width="1.500"/></svg>
    <i class="peek"></i>
  </div>
</div>
</body>
</html>
```
FILE: styles.css
```css
* { box-sizing: border-box; margin: 0; padding: 0; }
body { width: 1920px; height: 1080px; overflow: hidden; display: flex; flex-direction: column; font-family: "Open Sans", "Noto Sans", sans-serif; }
svg { display: block; flex: none; }
.defs { position: absolute; }

/* browser chrome */
.browser { height: 131px; flex: none; background: #cee7ea; }
.strip { height: 60px; display: flex; align-items: flex-start; padding: 9px 0 0 9px; }
.tab-search { width: 42px; height: 42px; border-radius: 14px; background: #cdf8ff; display: grid; place-items: center; }
.tabs { display: flex; gap: 8.300px; padding-left: 9px; }
.tab { width: 162px; height: 42px; border-radius: 14px; padding: 0 10px 0 12px; display: flex; align-items: center; color: #2f474c; position: relative; }
.tab .name { flex: none; width: 66px; margin-left: 12px; overflow: hidden; white-space: nowrap; font-size: 17.500px; letter-spacing: -.45px; line-height: 42px; padding-top: 1px; -webkit-mask-image: linear-gradient(90deg, #000 65%, transparent); mask-image: linear-gradient(90deg, #000 65%, transparent); }
.tab .close { margin-left: auto; margin-right: 7px; }
.tab.hot { background: #74d5e2; color: #12282c; }
.tab.sep::after { content: ""; position: absolute; right: -6px; top: 10px; width: 3px; height: 24px; border-radius: 2px; background: #74d5e2; }
.tab.active { height: 51px; padding-bottom: 9px; background: #f4fbfb; color: #12181a; border-radius: 14px 14px 0 0; }
.tab.active::before, .tab.active::after { content: ""; position: absolute; bottom: 0; width: 14px; height: 14px; }
.tab.active::before { left: -14px; background: radial-gradient(circle at 0 0, transparent 13.500px, #f4fbfb 14px); }
.tab.active::after { right: -14px; background: radial-gradient(circle at 100% 0, transparent 13.500px, #f4fbfb 14px); }
.plus { margin: 13px 0 0 21px; }
.win-buttons { margin: 12px 27px 0 auto; display: flex; gap: 53px; }
.toolbar { height: 71px; background: #f4fbfb; border-bottom: 2px solid #d9e5e8; border-radius: 14px 14px 0 0; display: flex; align-items: center; }
.nav-buttons { display: flex; gap: 34px; width: 180px; padding-left: 23px; }
.omnibox { width: 1479px; height: 51px; border-radius: 26px; background: #daecee; display: flex; align-items: center; padding: 0 24px 0 8px; }
.site-info { width: 36px; height: 36px; border-radius: 50%; background: #f4fbfb; display: grid; place-items: center; }
.url { margin-left: 12px; font-size: 20.200px; letter-spacing: -.5px; color: #16282b; }
.url span { color: #45575a; }
.lens { margin: 0 26px 0 auto; }
.extensions { display: flex; align-items: center; margin-left: 27px; }
.extensions svg + svg { margin-left: 31px; }
.bar { width: 3px; height: 23px; background: #8ff0fc; border-radius: 2px; margin: 0 25px 0 24px; }
.avatar { width: 30px; height: 30px; border-radius: 50%; background: #512da8; color: #e6e0f5; font-size: 15px; line-height: 30px; text-align: center; margin-right: 36px; }

/* page area */
.viewport { height: 889px; flex: none; display: flex; position: relative; overflow: hidden; }
.page { width: 1895px; height: 889px; background: #343a40; overflow: hidden; }
.site-nav { height: 105px; background: #a50000; display: flex; justify-content: space-between; align-items: center; padding: 0 100px 0 56px; font: bold 17.500px/24px "Liberation Serif", serif; color: #fff; }
.brand { display: flex; align-items: center; gap: 2px; }
.brand svg { margin-top: 5px; }
.links { display: flex; gap: 54.500px; color: #d27f7f; }
.contact { height: 528px; display: flex; padding-left: 341px; align-items: flex-start; }
.card { width: 516px; height: 422px; margin-top: 52px; border: 5px solid #fff; border-radius: 45px; background: linear-gradient(0deg, #fff, #f4f7fb); box-shadow: rgba(133, 189, 215, .8784) 0 30px 30px -20px; padding: 0 17px; font-family: "Lato", sans-serif; }
.card h1 { font-weight: 400; font-size: 34px; line-height: 40px; letter-spacing: 1.400px; color: #a50000; text-align: center; margin-top: 32px; }
.field { height: 57px; margin-top: 47px; border-radius: 22px; background: #fff; box-shadow: #cff0ff 0 10px 10px -5px; padding: 0 24px; font-size: 16.300px; line-height: 53px; color: #aaa; }
.field.area { height: 81px; margin-top: 17px; display: flex; justify-content: space-between; }
.field.area svg { align-self: flex-end; margin: 0 -20px 2px 0; }
.submit { height: 57px; margin-top: 30px; border-radius: 22px; background: #a50000; box-shadow: rgba(133, 189, 215, .8784) 0 20px 10px -15px; color: #fff; font-weight: 700; font-size: 16.500px; line-height: 54px; text-align: center; }
.map { margin-left: 22px; font-family: "Roboto", sans-serif; }
.road-label text { font-size: 34px; fill: #50555a; paint-order: stroke; stroke: #fff; stroke-width: 6px; }
.poi text { font-size: 47px; paint-order: stroke; stroke: #fff; stroke-width: 8px; stroke-linejoin: round; }
.green { fill: #188038; } .pink { fill: #e91e63; } .orange { fill: #d56e0c; } .blue { fill: #1a73e8; } .slate { fill: #546e7a; } .zone { fill: #3c4043; font-weight: 500; }
.poi .zone text { font-size: 43px; }
.info rect, .zoomer rect, .thumb > rect:first-child { filter: drop-shadow(0 3px 4px rgba(0, 0, 0, .3)); }
.info text { font-size: 42px; fill: #666; }
.info .title { font-size: 47px; font-weight: 500; fill: #000; }
.info .link { fill: #1a73e8; }
.google text { font-size: 57px; paint-order: stroke; stroke: #fff; stroke-width: 6px; }
.legal text { font-size: 34px; fill: #222; }

.site-footer { height: 256px; background: #a50000; color: #fff; font-family: "Liberation Serif", serif; font-weight: bold; display: grid; grid-template-columns: 630px 634px 629px; }
.foot-brand { display: flex; gap: 4px; align-items: flex-start; padding: 145px 0 0 224px; font-size: 18px; letter-spacing: 2px; line-height: 32px; }
.hours { text-align: center; padding-top: 29px; }
h2 { font-size: 29.500px; line-height: 42px; letter-spacing: 1.800px; }
.hours h2 { letter-spacing: 1.600px; }
h3 { font-size: 20.500px; line-height: 33px; letter-spacing: 2.350px; }
.hours p { font-size: 12.500px; line-height: 22px; height: 22px; letter-spacing: 2.750px; }
.hours p b { font-size: 10px; }
.socials { display: flex; flex-direction: column; align-items: center; padding: 63px 0 0; }
.socials h2 { margin-bottom: 44px; }
.socials p { font-size: 12.500px; line-height: 18px; letter-spacing: 2.200px; margin-bottom: 12px; }
.scrollbar { width: 25px; background: #f0f0f0; display: flex; flex-direction: column; align-items: center; padding: 10px 0 9px; }
.up, .down { border: 6px solid transparent; width: 0; height: 0; }
.up { border-top: 0; border-bottom-color: #505050; }
.down { border-bottom: 0; border-top-color: #505050; }
.thumb-bar { width: 21px; height: 190px; background: #c1c1c1; margin: 643px 0 25px; }
.watermark { position: absolute; left: 1498px; top: 771px; color: rgba(172, 172, 172, .75); white-space: nowrap; font-size: 21px; line-height: 30px; letter-spacing: -.05px; }
.watermark p:first-child { font-size: 29px; line-height: 42px; letter-spacing: -.1px; }

/* taskbar */
.taskbar { height: 60px; flex: none; display: flex; background: linear-gradient(90deg, #4a302c 0, #4c2224 33%, #4a2a28 50%, #491f20 72%, #3b191f 100%); color: #fff; }
.start { width: 72px; display: grid; place-items: center; }
.search { width: 432px; border: 2px solid #bdbdbd; background: #f2f2f2; color: #222; display: flex; align-items: center; padding-left: 16px; font-size: 21.500px; letter-spacing: -.1px; }
.search span { margin-left: 16px; padding-top: 2px; }
.elephants { margin: 0 3px 0 auto; }
.apps { display: flex; padding-left: 5px; }
.app { width: 48px; margin-left: 14px; padding-top: 2px; display: grid; place-items: center; border-bottom: 3px solid transparent; position: relative; }
.app:first-child { margin-left: 7px; }
.app:nth-child(2) { margin-left: 23px; }
.app.on { border-color: #76b9ed; }
.app.wide { width: 61px; margin: 0 -6px 0 9px; background: #705352; }
.app.split { border-image: linear-gradient(90deg, #76b9ed 71%, #5b8bb3 71%) 1; border-width: 0 0 3px; border-style: solid; }
.app text { font: bold 14px "Open Sans", sans-serif; fill: #fff; }
.badge { position: absolute; left: 22px; top: 29px; width: 31px; height: 25px; border-radius: 13px; border: 1px solid #888; background: #3c3a3a; font-size: 17px; font-weight: 600; line-height: 23px; text-align: center; letter-spacing: -.5px; }
.tray { margin-left: auto; width: 555px; display: flex; align-items: center; font-size: 18px; }
.temp { width: 46px; margin: 0 42px 0 11px; font-size: 20px; letter-spacing: -.5px; padding-top: 2px; }
.battery { margin-left: 27px; }
.wifi { margin-left: 27px; }
.cloud { margin-left: 23px; }
.speaker { margin-left: 23px; }
.clock { width: 100px; margin-left: 19px; display: flex; flex-direction: column; text-align: center; line-height: 28px; letter-spacing: -.3px; }
.notes { margin-left: 24px; }
.peek { width: 2px; height: 60px; background: #8a7478; margin-left: auto; margin-right: 6px; }
```
